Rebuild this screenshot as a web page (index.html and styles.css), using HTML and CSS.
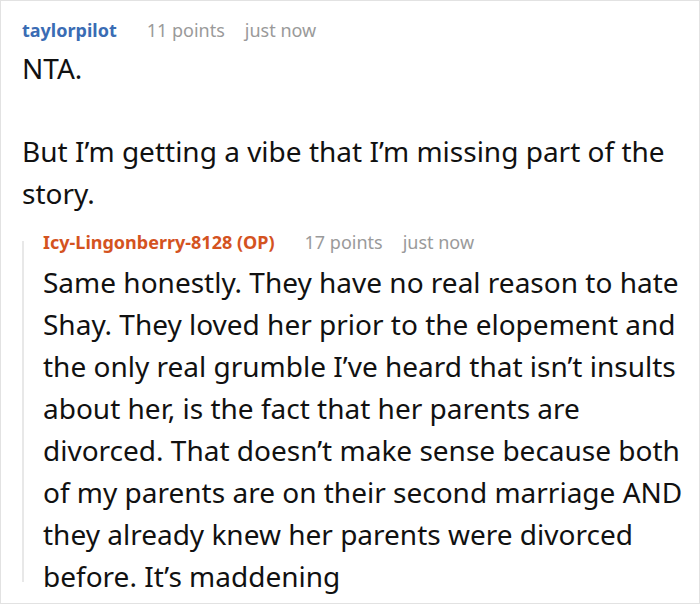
FILE: index.html
```html
<!DOCTYPE html>
<html>
<head>
<meta charset="utf-8">
<link rel="stylesheet" href="styles.css">
</head>
<body>
<div class="frame">
  <div class="comment">
    <div class="meta">
      <span class="author">taylorpilot</span>
      <span class="points">11 points</span>
      <span class="time">just now</span>
    </div>
    <div class="body">
      <p>NTA.</p>
      <p>But I’m getting a vibe that I’m missing part of the story.</p>
    </div>
    <div class="reply">
      <div class="meta">
        <span class="author op">Icy-Lingonberry-8128 (OP)</span>
        <span class="points">17 points</span>
        <span class="time">just now</span>
      </div>
      <div class="body">
        <p>Same honestly. They have no real reason to hate Shay. They loved her prior to the elopement and the only real grumble I’ve heard that isn’t insults about her, is the fact that her parents are divorced. That doesn’t make sense because both of my parents are on their second marriage AND they already knew her parents were divorced before. It’s maddening</p>
      </div>
    </div>
  </div>
</div>
</body>
</html>
```

FILE: styles.css
```css
html, body {
  margin: 0;
  padding: 0;
  background: #fff;
}
.frame {
  box-sizing: border-box;
  width: 700px;
  height: 604px;
  border: 1px solid #e2e2e2;
  overflow: hidden;
  font-family: "Noto Sans", "Open Sans", sans-serif;
  color: #111;
}
.comment {
  padding: 16px 8px 0 21px;
}
.meta {
  font-size: 18px;
  line-height: 26px;
  color: #9a9a9a;
  display: flex;
  align-items: baseline;
}
.author {
  font-weight: 700;
  color: #3a6cb4;
  margin-right: 30px;
}
.author.op {
  color: #d4531f;
}
.points {
  margin-right: 20px;
}
.body {
  font-size: 28px;
  line-height: 42px;
  margin-top: 4px;
}
.body p {
  margin: 0 0 41px 0;
}
.body p:last-child {
  margin-bottom: 0;
}
.reply {
  position: relative;
  margin-top: 15px;
  padding-left: 21px;
}
.reply::before {
  content: "";
  position: absolute;
  left: 0;
  top: 12px;
  bottom: 15px;
  width: 2px;
  background: #e8e8e8;
}
.reply .body {
  margin-top: 6px;
}
```
